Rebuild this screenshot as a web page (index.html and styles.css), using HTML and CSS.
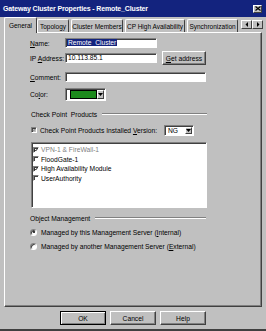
FILE: index.html
```html
<!DOCTYPE html>
<html lang="en">
<head>
    <meta charset="UTF-8">
    <title>Gateway Cluster Properties - Remote_Cluster</title>
    <link rel="stylesheet" href="styles.css">
</head>
<body>
<div class="window">
    <div class="titlebar">
        <span class="title">Gateway Cluster Properties - Remote_Cluster</span>
        <span class="close-btn">
            <svg width="6" height="5" viewBox="0 0 6 5"><path d="M0.5 0.5 L5.5 4.5 M5.5 0.5 L0.5 4.5" stroke="#000" stroke-width="1.2"/></svg>
        </span>
    </div>

    <div class="tabs">
        <div class="tab active">General</div>
        <div class="tab t-topology">Topology</div>
        <div class="tab t-members">Cluster Members</div>
        <div class="tab t-ha">CP High Availability</div>
        <div class="tab t-sync">Synchronization</div>
        <div class="tab-arrows">
            <span class="arrow-btn"><svg width="4" height="5" viewBox="0 0 4 5"><path d="M3 0 L0.5 2.5 L3 5 Z" fill="#000"/></svg></span>
            <span class="arrow-btn"><svg width="4" height="5" viewBox="0 0 4 5"><path d="M1 0 L3.5 2.5 L1 5 Z" fill="#000"/></svg></span>
        </div>
    </div>

    <div class="panel">
        <div class="row r-name">
            <span class="label"><u>N</u>ame:</span>
            <div class="field short"><span class="selected">Remote_Cluster</span></div>
        </div>
        <div class="row r-ip">
            <span class="label">IP <u>A</u>ddress:</span>
            <div class="field short">10.113.85.1</div>
            <button class="btn get-addr"><u>G</u>et address</button>
        </div>
        <div class="row r-comment">
            <span class="label"><u>C</u>omment:</span>
            <div class="field long"></div>
        </div>
        <div class="row r-color">
            <span class="label">Co<u>l</u>or:</span>
            <div class="combo color-combo">
                <span class="swatch"></span>
                <span class="drop-btn"><svg width="5" height="3" viewBox="0 0 5 3"><path d="M0 0 L5 0 L2.5 3 Z" fill="#000"/></svg></span>
            </div>
        </div>

        <div class="group g-products">
            <span>Check Point&nbsp; Products</span>
            <span class="etch"></span>
        </div>
        <div class="row r-version">
            <span class="check disabled"><svg width="5" height="5" viewBox="0 0 5 5"><path d="M0.5 2.2 L2 3.8 L4.5 0.8" stroke="#808080" stroke-width="1.1" fill="none"/></svg></span>
            <span class="check-label">Check Point Products Installed <u>V</u>ersion:</span>
            <div class="combo version-combo">
                <span class="combo-text">NG</span>
                <span class="drop-btn"><svg width="5" height="3" viewBox="0 0 5 3"><path d="M0 0 L5 0 L2.5 3 Z" fill="#000"/></svg></span>
            </div>
        </div>

        <div class="listbox">
            <div class="item grayed">
                <span class="check"><svg width="5" height="5" viewBox="0 0 5 5"><path d="M0.5 2.2 L2 3.8 L4.5 0.8" stroke="#000" stroke-width="1.1" fill="none"/></svg></span>
                VPN-1 &amp; FireWall-1
            </div>
            <div class="item"><span class="check"></span>FloodGate-1</div>
            <div class="item">
                <span class="check"><svg width="5" height="5" viewBox="0 0 5 5"><path d="M0.5 2.2 L2 3.8 L4.5 0.8" stroke="#000" stroke-width="1.1" fill="none"/></svg></span>
                High Availability Module
            </div>
            <div class="item"><span class="check"></span>UserAuthority</div>
        </div>

        <div class="group g-management">
            <span>Object Management</span>
            <span class="etch"></span>
        </div>
        <div class="radio-row">
            <span class="radio on"></span>
            <span>Managed by this Management Server (<u>I</u>nternal)</span>
        </div>
        <div class="radio-row">
            <span class="radio"></span>
            <span>Managed by another Management Server (<u>E</u>xternal)</span>
        </div>
    </div>

    <div class="buttons">
        <button class="btn dlg default">OK</button>
        <button class="btn dlg">Cancel</button>
        <button class="btn dlg">Help</button>
    </div>
</div>
</body>
</html>
```

FILE: styles.css
```css
body {
    margin: 0;
    font-family: "Liberation Sans", Arial, sans-serif;
    font-size: 6.7px;
    color: #000;
    background: #c0c0c0;
}

.window {
    width: 266px;
    height: 331px;
    box-sizing: border-box;
    background: #c0c0c0;
    border-bottom: 2px solid #404040;
    display: flex;
    flex-direction: column;
}

/* title bar */
.titlebar {
    height: 17px;
    background: #13237e;
    display: flex;
    align-items: center;
    padding: 0 4px 0 3px;
}
.title {
    color: #fff;
    font-weight: bold;
    font-size: 7px;
    letter-spacing: -0.15px;
}
.close-btn {
    margin-left: auto;
    width: 9px;
    height: 8px;
    box-sizing: border-box;
    background: #c0c0c0;
    border: 1px solid;
    border-color: #fff #404040 #404040 #fff;
    display: flex;
    align-items: center;
    justify-content: center;
}

/* tabs */
.tabs {
    height: 15px;
    display: flex;
    align-items: flex-end;
    padding-left: 4px;
}
.tab {
    height: 13px;
    box-sizing: border-box;
    border: 1px solid;
    border-color: #fff #404040 transparent #fff;
    border-bottom: none;
    border-radius: 2px 2px 0 0;
    display: flex;
    align-items: center;
    justify-content: center;
    margin-right: 2px;
    white-space: nowrap;
    font-size: 6.5px;
}
.tab.active {
    height: 16px;
    width: 33px;
    margin-bottom: -1px;
    margin-right: 0;
    position: relative;
    z-index: 1;
    background: #c0c0c0;
}
.t-topology { width: 32px; }
.t-members { width: 52px; }
.t-ha { width: 60px; }
.t-sync { width: 51px; }

.tab-arrows {
    display: flex;
    margin-left: 1px;
    margin-bottom: 3px;
}
.arrow-btn {
    width: 11px;
    height: 9px;
    box-sizing: border-box;
    border: 1px solid;
    border-color: #fff #404040 #404040 #fff;
    display: flex;
    align-items: center;
    justify-content: center;
}

/* tab page */
.panel {
    margin-left: 4px;
    width: 258px;
    height: 275px;
    box-sizing: border-box;
    border: 1px solid;
    border-color: #fff #404040 #404040 #fff;
    box-shadow: inset -1px -1px #808080;
    padding: 3px 0 0 25px;
}

.row {
    display: flex;
    align-items: center;
}
.r-name { height: 14px; }
.r-ip { height: 16px; }
.r-comment { height: 14px; margin-top: 4px; }
.r-color { height: 16px; margin-top: 2px; }
.r-version { height: 12px; margin-top: 4px; padding-left: 1px; }

.label {
    width: 35px;
}

.field {
    height: 10px;
    box-sizing: border-box;
    background: #fff;
    border: 1px solid;
    border-color: #808080 #fff #fff #808080;
    box-shadow: inset 1px 1px #404040;
    padding: 0 0 0 2px;
    line-height: 8px;
    white-space: nowrap;
}
.field.short { width: 92px; }
.field.long { width: 141px; }

.selected {
    background: #13237e;
    color: #fff;
    padding: 0 1px;
    margin-left: -1px;
}

.btn {
    font: inherit;
    color: #000;
    padding: 0;
    background: #c0c0c0;
    height: 14px;
    box-sizing: border-box;
    border: 1px solid;
    border-color: #fff #404040 #404040 #fff;
    box-shadow: inset -1px -1px #808080;
}
.get-addr {
    width: 44px;
    margin-left: 5px;
}

.combo {
    box-sizing: border-box;
    background: #fff;
    border: 1px solid;
    border-color: #808080 #fff #fff #808080;
    box-shadow: inset 1px 1px #404040;
    display: flex;
    align-items: center;
    padding: 1px 1px 1px 2px;
}
.color-combo {
    width: 41px;
    height: 13px;
}
.swatch {
    width: 27px;
    height: 7px;
    margin-left: 2px;
    background: #1d8a1d;
    border: 1px solid #000;
}
.drop-btn {
    margin-left: auto;
    width: 7px;
    height: 9px;
    box-sizing: border-box;
    background: #c0c0c0;
    border: 1px solid;
    border-color: #fff #404040 #404040 #fff;
    display: flex;
    align-items: center;
    justify-content: center;
}
.version-combo {
    width: 30px;
    height: 11px;
}
.version-combo .drop-btn {
    height: 7px;
}
.combo-text {
    padding-left: 1px;
}

/* group headings with etched line */
.group {
    width: 176px;
    height: 12px;
    display: flex;
    align-items: center;
    gap: 5px;
}
.g-products { margin-top: 6px; padding-left: 1px; }
.g-management { margin-top: 4px; }
.etch {
    flex: 1;
    height: 0;
    border-top: 1px solid #808080;
    border-bottom: 1px solid #fff;
}

.check {
    width: 6px;
    height: 6px;
    box-sizing: border-box;
    background: #fff;
    border: 1px solid;
    border-color: #808080 #fff #fff #808080;
    box-shadow: inset 1px 1px #404040;
    display: inline-flex;
    align-items: center;
    justify-content: center;
    flex-shrink: 0;
}
.check svg {
    width: 4px;
    height: 4px;
}
.check.disabled {
    background: #c0c0c0;
}
.check-label {
    margin-left: 3px;
    width: 124px;
}

.listbox {
    margin-top: 6px;
    margin-left: 1px;
    width: 176px;
    height: 66px;
    box-sizing: border-box;
    background: #fff;
    border: 1px solid;
    border-color: #808080 #fff #fff #808080;
    box-shadow: inset 1px 1px #404040;
    padding: 2px 0 0 1px;
}
.item {
    height: 9.5px;
    display: flex;
    align-items: center;
    gap: 2px;
}
.item.grayed {
    color: #808080;
}

.radio-row {
    height: 12px;
    margin-top: 2px;
    display: flex;
    align-items: center;
    gap: 4px;
}
.radio {
    width: 7px;
    height: 7px;
    box-sizing: border-box;
    border-radius: 50%;
    background: #fff;
    border: 1px solid;
    border-color: #808080 #fff #fff #808080;
    box-shadow: inset 1px 1px #404040;
    display: flex;
    align-items: center;
    justify-content: center;
}
.radio.on::after {
    content: "";
    width: 2px;
    height: 2px;
    border-radius: 50%;
    background: #000;
}

/* dialog buttons */
.buttons {
    margin-top: 4px;
    padding-left: 60px;
    display: flex;
    gap: 4px;
}
.dlg {
    width: 46px;
}
.dlg.default {
    border-color: #000;
    box-shadow: inset 1px 1px #fff, inset -1px -1px #808080;
}
```
